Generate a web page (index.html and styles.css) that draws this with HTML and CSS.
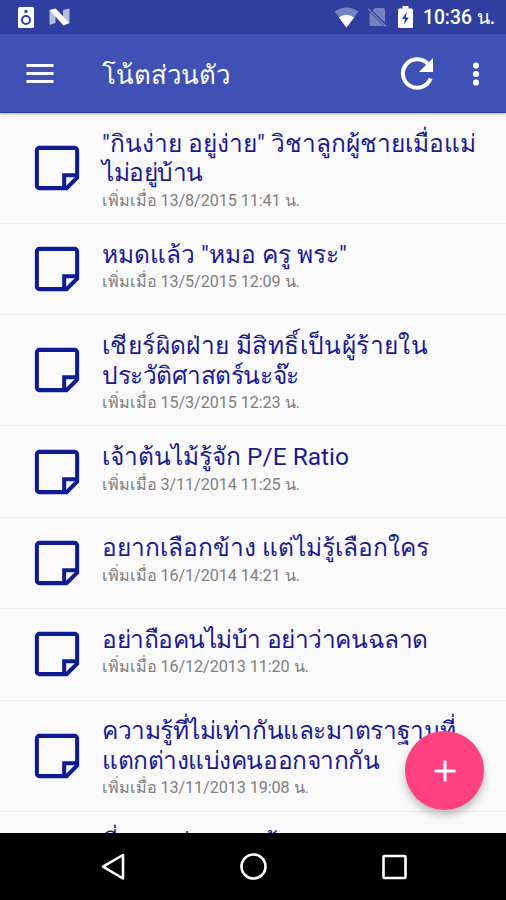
FILE: index.html
```
<!DOCTYPE html>
<html lang="th">
<head>
    <meta charset="UTF-8">
    <meta name="viewport" content="width=device-width, initial-scale=1.0">
    <title>โน้ตส่วนตัว</title>
    <link rel="stylesheet" href="styles.css">
</head>
<body>
    <svg class="defs" width="0" height="0">
        <symbol id="note" viewBox="0 0 48 48">
            <path d="M5.500 3H42.500A2.500 2.500 0 0 1 45 5.500V34L34 45H5.500A2.500 2.500 0 0 1 3 42.500V5.500A2.500 2.500 0 0 1 5.500 3Z"/>
            <path d="M44.500 31.500H31.500V44.500"/>
        </symbol>
    </svg>
    <div class="screen">
        <div class="status">
            <svg class="speaker" width="16" height="21" viewBox="0 0 16 21">
                <rect width="16" height="21" rx="1.500" fill="#fff"/>
                <circle cx="8" cy="4.500" r="1.700" fill="#303f9f"/>
                <circle cx="8" cy="13" r="4" fill="none" stroke="#303f9f" stroke-width="2"/>
            </svg>
            <svg class="nlogo" width="21" height="18" viewBox="0 0 21 18">
                <path d="M0.500 2V17L6.500 15V7ZM14 2L20.500 0.500V15L14 9Z" fill="#fff" opacity=".65"/>
                <path d="M0.500 2L6.500 0.500L20.500 15L14.500 17.500Z" fill="#fff"/>
            </svg>
            <svg class="wifi" width="25" height="21" viewBox="0 0 25 21">
                <path d="M12.500 20.500L0.500 4.500Q12.500 -3.500 24.500 4.500Z" fill="#fff" opacity=".35"/>
                <path d="M12.500 20.500L4.800 10.500Q12.500 5 20.200 10.500Z" fill="#fff"/>
            </svg>
            <svg class="sim" width="19" height="20" viewBox="0 0 19 20">
                <path d="M7 1H15.500Q17 1 17 2.500V15.500L4.500 3.500ZM1.500 5L15.500 19H3Q1.500 19 1.500 17.500Z" fill="#fff" opacity=".35"/>
                <path d="M0.500 2L18 19.500" stroke="#fff" stroke-width="1.500" opacity=".35"/>
            </svg>
            <svg class="battery" width="15" height="22" viewBox="0 0 15 22">
                <path d="M4.500 0H10.500V2.500H13.500Q15 2.500 15 4V20.500Q15 22 13.500 22H1.500Q0 22 0 20.500V4Q0 2.500 1.500 2.500H4.500Z" fill="#fff"/>
                <path d="M8.800 6L4 13H7L6 18.500L11 11.500H8Z" fill="#303f9f"/>
            </svg>
            <span class="time">10:36 น.</span>
        </div>
        <div class="toolbar">
            <svg class="menu" width="28" height="22" viewBox="0 0 28 22">
                <path d="M0.500 2.500H27.500M0.500 10.500H27.500M0.500 18.500H27.500" stroke="#fff" stroke-width="3"/>
            </svg>
            <h1>โน้ตส่วนตัว</h1>
            <svg class="refresh" width="34" height="34" viewBox="0 0 34 34">
                <path d="M27.500 6.500A14.300 14.300 0 1 0 30.600 21.500" fill="none" stroke="#fff" stroke-width="4"/>
                <path d="M33 1V15H19Z" fill="#fff"/>
            </svg>
            <svg class="more" width="8" height="24" viewBox="0 0 8 24">
                <circle cx="4" cy="3.500" r="3.100" fill="#fff"/>
                <circle cx="4" cy="12" r="3.100" fill="#fff"/>
                <circle cx="4" cy="20.500" r="3.100" fill="#fff"/>
            </svg>
        </div>
        <div class="list">
            <div class="row two">
                <svg class="note"><use href="#note"/></svg>
                <div class="text">
                    <h2>"กินง่าย อยู่ง่าย" วิชาลูกผู้ชายเมื่อแม่<br><span class="tight">ไม่อยู่บ้าน</span></h2>
                    <p>เพิ่มเมื่อ 13/8/2015 11:41 น.</p>
                </div>
            </div>
            <div class="row">
                <svg class="note"><use href="#note"/></svg>
                <div class="text">
                    <h2>หมดแล้ว "หมอ ครู พระ"</h2>
                    <p>เพิ่มเมื่อ 13/5/2015 12:09 น.</p>
                </div>
            </div>
            <div class="row two">
                <svg class="note"><use href="#note"/></svg>
                <div class="text">
                    <h2><span class="wide">เชียร์ผิดฝ่าย มีสิทธิ์เป็นผู้ร้ายใน</span><br><span class="tight">ประวัติศาสตร์นะจ๊ะ</span></h2>
                    <p>เพิ่มเมื่อ 15/3/2015 12:23 น.</p>
                </div>
            </div>
            <div class="row">
                <svg class="note"><use href="#note"/></svg>
                <div class="text">
                    <h2>เจ้าต้นไม้รู้จัก P/E Ratio</h2>
                    <p>เพิ่มเมื่อ 3/11/2014 11:25 น.</p>
                </div>
            </div>
            <div class="row">
                <svg class="note"><use href="#note"/></svg>
                <div class="text">
                    <h2>อยากเลือกข้าง แต่ไม่รู้เลือกใคร</h2>
                    <p>เพิ่มเมื่อ 16/1/2014 14:21 น.</p>
                </div>
            </div>
            <div class="row">
                <svg class="note"><use href="#note"/></svg>
                <div class="text">
                    <h2 class="tight">อย่าถือคนไม่บ้า อย่าว่าคนฉลาด</h2>
                    <p>เพิ่มเมื่อ 16/12/2013 11:20 น.</p>
                </div>
            </div>
            <div class="row two">
                <svg class="note"><use href="#note"/></svg>
                <div class="text">
                    <h2 class="tight">ความรู้ที่ไม่เท่ากันและมาตราฐานที่<br>แตกต่างแบ่งคนออกจากกัน</h2>
                    <p>เพิ่มเมื่อ 13/11/2013 19:08 น.</p>
                </div>
            </div>
            <div class="row two">
                <svg class="note"><use href="#note"/></svg>
                <div class="text">
                    <h2>ที่จะมาส่วนรวมผู้</h2>
                </div>
            </div>
        </div>
        <div class="navbar">
            <svg width="26" height="28" viewBox="0 0 26 28">
                <path d="M24 2V25.500L4 13.700Z"/>
            </svg>
            <svg width="28" height="28" viewBox="0 0 28 28">
                <circle cx="14.500" cy="13.500" r="12"/>
            </svg>
            <svg width="26" height="26" viewBox="0 0 26 26">
                <rect x="2.500" y="2" width="22" height="22" rx="1"/>
            </svg>
        </div>
        <button class="fab">
            <svg width="22" height="22" viewBox="0 0 22 22">
                <path d="M11 0.500V21.500M0.500 11H21.500" stroke="#fff" stroke-width="3"/>
            </svg>
        </button>
    </div>
</body>
</html>
```
FILE: styles.css
```
*{
    box-sizing: border-box;
}
body{
    margin: 0;
    font-family: Roboto, sans-serif;
}
h1, h2, p{
    margin: 0;
    font-weight: 400;
    white-space: nowrap;
}
svg{
    flex-shrink: 0;
}
.defs{
    position: absolute;
}
.screen{
    position: relative;
    display: flex;
    flex-direction: column;
    width: 506px;
    height: 900px;
    overflow: hidden;
    background-color: #fafafa;
}
.status{
    display: flex;
    align-items: center;
    height: 34px;
    padding: 0 11px 0 18px;
    background-color: #303f9f;
    color: white;
}
.nlogo{
    margin-left: 15px;
}
.wifi{
    margin-left: auto;
}
.sim{
    margin-left: 9px;
}
.battery{
    margin-left: 11px;
}
.time{
    margin-left: 10px;
    padding-top: 2px;
    font-size: 19.300px;
    font-weight: 500;
    line-height: 32px;
}
.toolbar{
    display: flex;
    align-items: center;
    height: 79px;
    padding: 1px 26px 0;
    background-color: #3f51b5;
    border-bottom: 1px solid #2b3da6;
    color: white;
    box-shadow: 0 1px 3px rgba(0, 0, 0, 0.3);
    z-index: 1;
}
.toolbar h1{
    flex: 1;
    margin-left: 48px;
    padding-top: 3px;
    font-size: 25.800px;
    line-height: 40px;
}
.more{
    margin-left: 38px;
}
.list{
    flex: 1;
    min-height: 0;
    overflow: hidden;
}
.row{
    display: flex;
    align-items: center;
    height: 91.400px;
    padding-left: 33.700px;
    border-bottom: 1px solid #eeeeee;
}
.row.two{
    height: 111px;
}
.note{
    width: 46px;
    height: 46px;
    fill: none;
    stroke: #0d1b94;
    stroke-width: 4.200;
}
.text{
    align-self: flex-start;
    margin-left: 22.300px;
    padding-top: 15.700px;
}
.text h2{
    font-size: 24.500px;
    line-height: 29.500px;
    color: #1a1a94;
}
.text .wide{
    letter-spacing: 0.400px;
}
.text .tight{
    letter-spacing: -0.450px;
}
.text p{
    font-size: 16.200px;
    line-height: 26px;
    letter-spacing: -0.080px;
    color: #808080;
}
.navbar{
    display: flex;
    align-items: center;
    justify-content: center;
    gap: 114px;
    height: 67px;
    background-color: black;
}
.navbar svg{
    fill: none;
    stroke: white;
    stroke-width: 2.600;
    stroke-linejoin: round;
}
.fab{
    position: absolute;
    left: 405px;
    top: 731px;
    display: flex;
    align-items: center;
    justify-content: center;
    width: 79px;
    height: 79px;
    padding: 0;
    border: 0;
    border-radius: 50%;
    background-color: #ff4081;
    box-shadow: 0 5px 8px rgba(0, 0, 0, 0.25);
}
```
